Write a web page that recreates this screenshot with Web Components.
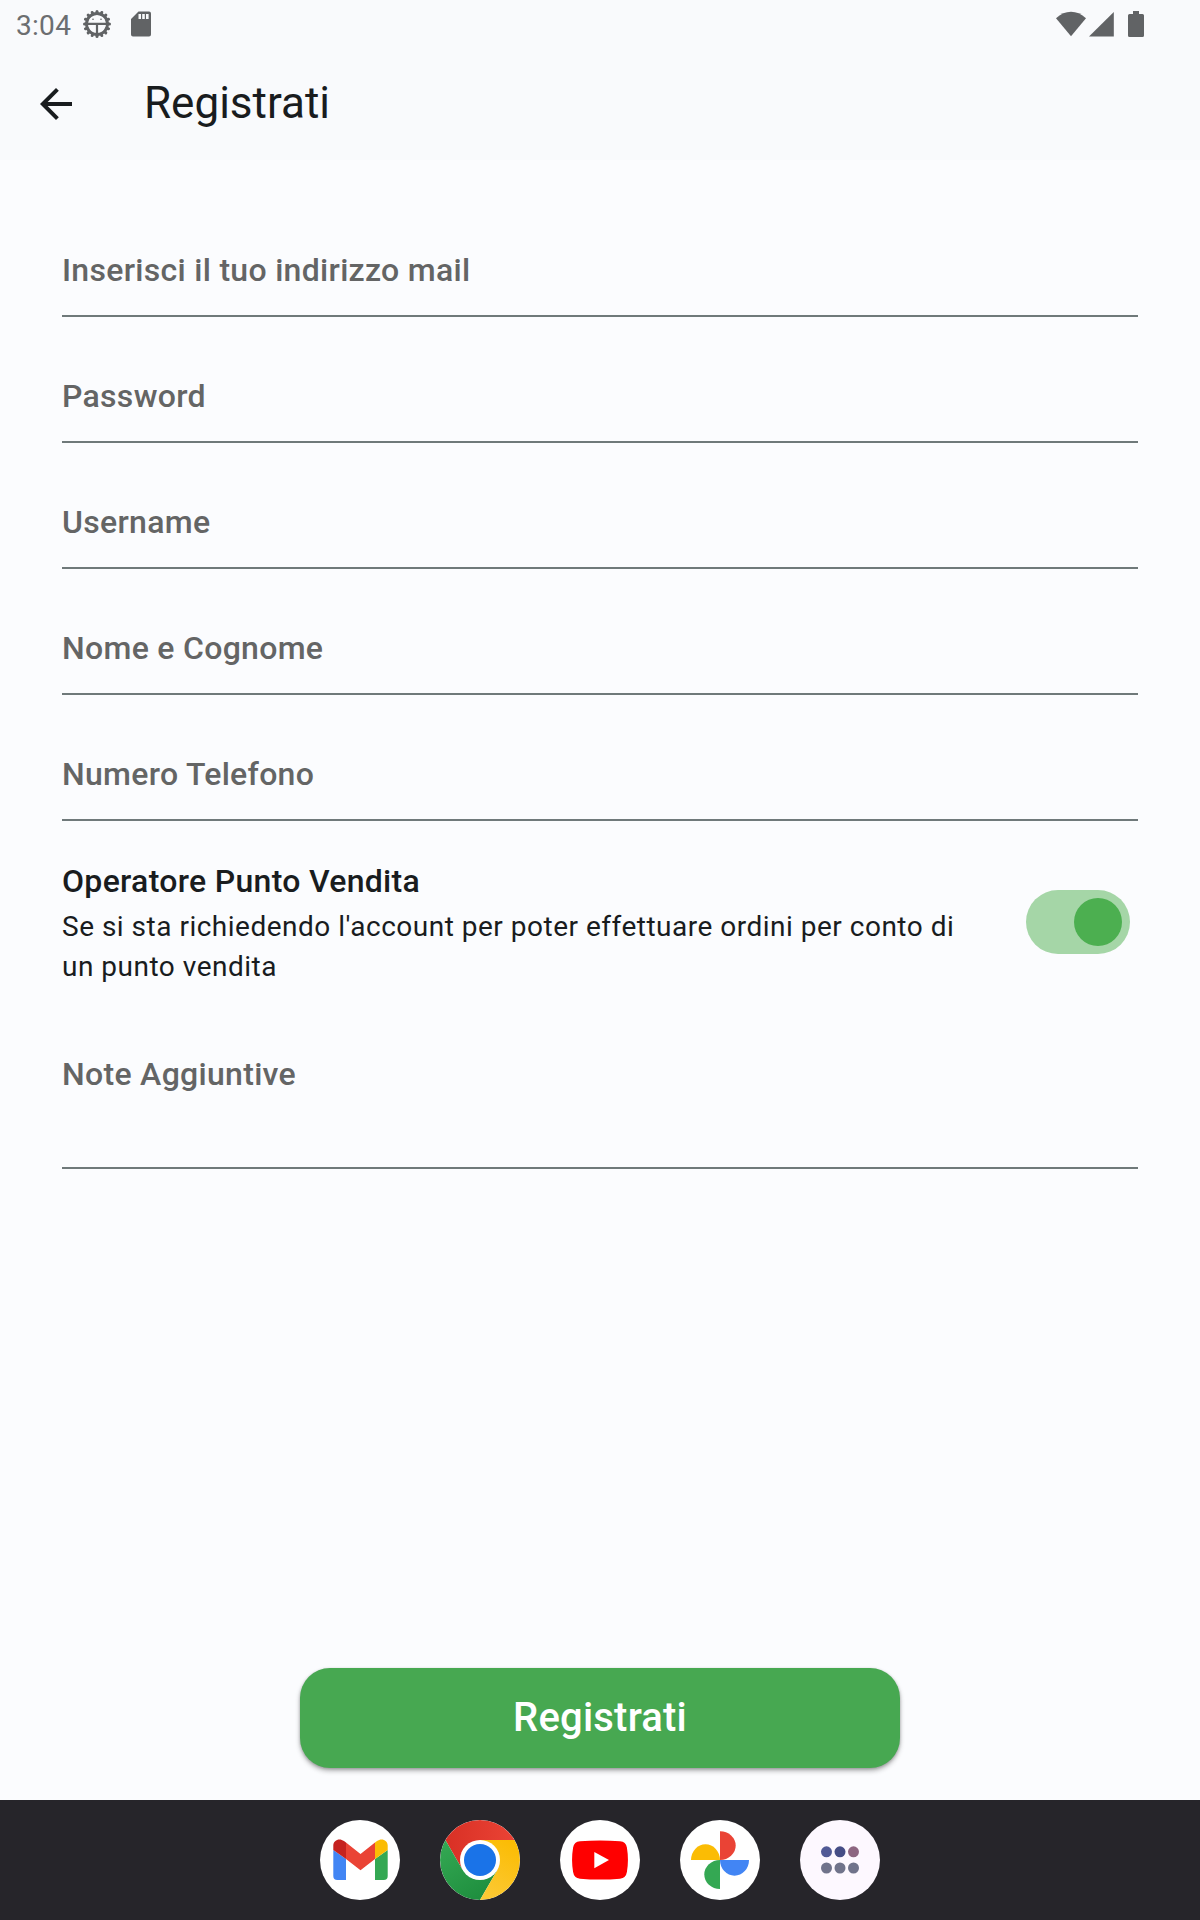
<!DOCTYPE html>
<html lang="it">
<head>
<meta charset="utf-8">
<title>Registrati</title>
<style>
html,body{margin:0;padding:0}
body{width:1200px;height:1920px;overflow:hidden;background:#fbfcfe;font-family:Roboto,"Liberation Sans",sans-serif}
</style>
</head>
<body>
<signup-screen></signup-screen>
<script>
function define(name, html) {
  const t = document.createElement('template');
  t.innerHTML = html;
  customElements.define(name, class extends HTMLElement {
    constructor() {
      super();
      this.attachShadow({mode: 'open'}).appendChild(t.content.cloneNode(true));
    }
  });
}

/* Rounded teeth around the rim of the debug icon */
const teeth = Array.from({length: 16}, (_, i) =>
  `<path d="M14 3.4V1.5" transform="rotate(${i * 22.5} 14 14)"/>`).join('');

define('status-bar', `
<style>
:host{display:flex;align-items:center;justify-content:space-between;height:48px;box-sizing:border-box;padding:0 55px 0 16px;color:#616365}
.side{display:flex;align-items:center;height:48px}
.time{font-size:28px;line-height:48px;width:66px;margin-top:3px;letter-spacing:.3px;white-space:nowrap;color:#6c6e70}
svg{display:block;fill:currentColor}
.bug{margin-right:19px}
</style>
<div class="side">
  <span class="time">3:04</span>
  <svg class="bug" width="30" height="30" viewBox="-1 -1 30 30">
    <g stroke="currentColor" stroke-width="3" stroke-linecap="round">${teeth}</g>
    <circle cx="14" cy="14" r="10.500" fill="none" stroke="currentColor" stroke-width="2.800"/>
    <path d="M4 12.700H24V15H15.100V24H12.900V15H4Z"/>
    <circle cx="10" cy="9.200" r=".8"/><circle cx="18" cy="9.200" r=".8"/>
  </svg>
  <svg width="20" height="26" viewBox="0 0 20 26"><path fill-rule="evenodd" d="M7.5 .5H18a2 2 0 0 1 2 2V23.5a2 2 0 0 1-2 2H2a2 2 0 0 1-2-2V8ZM7.5 3V8H10V3ZM11.2 3V8H13.8V3ZM15 3V8H17.6V3Z"/></svg>
</div>
<div class="side">
  <svg width="90" height="28" viewBox="0 0 90 28">
    <path d="M1 8.2C10 -.4 22 -.4 31 8.2L16 26.2Z"/>
    <path d="M58.8 2V26.6H34Z"/>
    <path d="M78 1H84V4H87.500a1.500 1.500 0 0 1 1.500 1.500V25.500a1.500 1.500 0 0 1-1.500 1.500H74.500a1.500 1.500 0 0 1-1.500-1.500V5.500a1.500 1.500 0 0 1 1.500-1.500H78Z"/>
  </svg>
</div>`);

define('app-bar', `
<style>
:host{display:flex;align-items:center;height:112px;padding-left:40px;color:#191c1e}
svg{display:block;margin-right:72px}
h1{margin:0;font-weight:400;font-size:44px;line-height:56px;padding-bottom:2px;white-space:nowrap}
</style>
<svg width="32" height="32" viewBox="0 0 32 32" fill="currentColor"><path d="M32 14H7.660L18.840 2.820L16 0L0 16L16 32L18.820 29.180L7.660 18H32Z"/></svg>
<h1><slot></slot></h1>`);

define('text-field', `
<style>
:host{display:block;height:126px;box-sizing:border-box;padding-top:55px;border-bottom:2px solid #6f797a;color:#646565;font-size:32px;font-weight:500;line-height:48px;letter-spacing:.3px}
:host([multiline]){height:156px;padding-top:37px}
</style>
<slot></slot>`);

define('toggle-switch', `
<style>
:host{display:flex;box-sizing:border-box;width:104px;height:64px;padding:8px;border-radius:32px;background:#a5d6a7;justify-content:flex-end}
i{width:48px;height:48px;border-radius:50%;background:#4caf50}
</style><i></i>`);

define('switch-row', `
<style>
:host{display:flex;align-items:center;justify-content:space-between;height:130px;padding:36px 8px 0 0;color:#191c1e}
.text{width:910px}
.title{font-size:32px;font-weight:500;line-height:48px;letter-spacing:.3px;margin-bottom:2px}
.desc{font-size:28px;line-height:40px;letter-spacing:.5px}
</style>
<div class="text"><div class="title"><slot name="title"></slot></div><div class="desc"><slot></slot></div></div>
<toggle-switch></toggle-switch>`);

define('primary-button', `
<style>
:host{display:flex;align-items:center;justify-content:center;width:600px;height:100px;border-radius:30px;background:#47a851;color:#fff;font-size:40px;font-weight:500;line-height:48px;letter-spacing:.2px;box-shadow:0 3px 5px rgba(0,0,0,.28),0 1px 3px rgba(0,0,0,.2)}
</style><slot></slot>`);

define('app-icon', `
<style>
:host{display:flex;align-items:center;justify-content:center;width:80px;height:80px;border-radius:50%;overflow:hidden;background:var(--disc,#fff)}
</style><slot></slot>`);

define('task-bar', `
<style>
:host{display:flex;align-items:center;justify-content:center;gap:40px;height:120px;background:#26252a}
svg{display:block}
</style>
<app-icon><svg width="80" height="80" viewBox="0 0 80 80">
  <path fill="#4285f4" d="M13.300 30L26 39V60H17.300a4 4 0 0 1-4-4Z"/>
  <path fill="#34a853" d="M55 39L67.700 30V56a4 4 0 0 1-4 4H55Z"/>
  <path fill="#ea4335" d="M26 22.500L40.500 34L55 22.500V39L40.500 50.300L26 39Z"/>
  <path fill="#c5221f" d="M13.300 25.500C13.300 20 19.500 17.500 24 21L26 22.500V39L13.300 30Z"/>
  <path fill="#fbbc04" d="M67.700 25.500C67.700 20 61.500 17.500 57 21L55 22.500V39L67.700 30Z"/>
</svg></app-icon>
<app-icon><svg width="80" height="80" viewBox="0 0 80 80">
  <defs>
    <linearGradient id="r" x1="0" x2="1"><stop stop-color="#d93025"/><stop offset="1" stop-color="#ea4335"/></linearGradient>
    <linearGradient id="g" x1=".7" y1="1" x2=".1" y2="0"><stop stop-color="#1e8e3e"/><stop offset="1" stop-color="#34a853"/></linearGradient>
    <linearGradient id="y" x1=".3" y1="1" x2=".7" y2="0"><stop stop-color="#fcc934"/><stop offset="1" stop-color="#fbbc04"/></linearGradient>
  </defs>
  <path fill="url(#r)" d="M40 40L22.680 50L5.360 20A40 40 0 0 1 74.640 20H40Z"/>
  <path fill="url(#g)" d="M40 40L57.320 50L40 80A40 40 0 0 1 5.360 20L22.680 50Z"/>
  <path fill="url(#y)" d="M40 40V20H74.640A40 40 0 0 1 40 80L57.320 50Z"/>
  <circle cx="40" cy="40" r="20" fill="#fff"/><circle cx="40" cy="40" r="16" fill="#1a73e8"/>
</svg></app-icon>
<app-icon><svg width="80" height="80" viewBox="0 0 80 80">
  <path fill="#f00" d="M20 21.200Q40 19.600 60 21.200Q66 21.700 66.900 27.500Q69 40 66.900 52Q66 58 60 58.700Q40 60.400 20 58.700Q14 58 13.100 52Q11 40 13.100 27.500Q14 21.700 20 21.200Z"/>
  <path fill="#fff" d="M34.300 32L49 40L34.300 48.200Z"/>
</svg></app-icon>
<app-icon><svg width="80" height="80" viewBox="0 0 80 80">
  <path fill="#ea4335" d="M40 11.200A15.700 14.400 0 0 1 40 40Z"/>
  <path fill="#4285f4" d="M40 40H69A14.500 15.700 0 0 1 40 40Z"/>
  <path fill="#34a853" d="M40 40V69A15.700 14.500 0 0 1 40 40Z"/>
  <path fill="#fbbc04" d="M40 40H11A14.500 15.700 0 0 1 40 40Z"/>
</svg></app-icon>
<app-icon style="--disc:#fdf8ff"><svg width="80" height="80" viewBox="0 0 80 80">
  <circle cx="26.500" cy="31.800" r="5.500" fill="#515a96"/><circle cx="40" cy="31.800" r="5.500" fill="#454d86"/><circle cx="53.500" cy="31.800" r="5.500" fill="#8d6681"/>
  <g fill="#70738b"><circle cx="26.500" cy="48" r="5.500"/><circle cx="40" cy="48" r="5.500"/><circle cx="53.500" cy="48" r="5.500"/></g>
</svg></app-icon>`);

define('signup-screen', `
<style>
:host{display:flex;flex-direction:column;width:1200px;height:1920px}
header{background:#f9fafc}
main{flex:1;display:flex;flex-direction:column;padding:31px 62px 32px}
primary-button{margin:auto auto 0}
text-field[multiline]{margin-top:26px}
</style>
<header><status-bar></status-bar><app-bar>Registrati</app-bar></header>
<main>
  <text-field>Inserisci il tuo indirizzo mail</text-field>
  <text-field>Password</text-field>
  <text-field>Username</text-field>
  <text-field>Nome e Cognome</text-field>
  <text-field>Numero Telefono</text-field>
  <switch-row><span slot="title">Operatore Punto Vendita</span>Se si sta richiedendo l'account per poter effettuare ordini per conto di un punto vendita</switch-row>
  <text-field multiline>Note Aggiuntive</text-field>
  <primary-button>Registrati</primary-button>
</main>
<task-bar></task-bar>`);
</script>
</body>
</html>
